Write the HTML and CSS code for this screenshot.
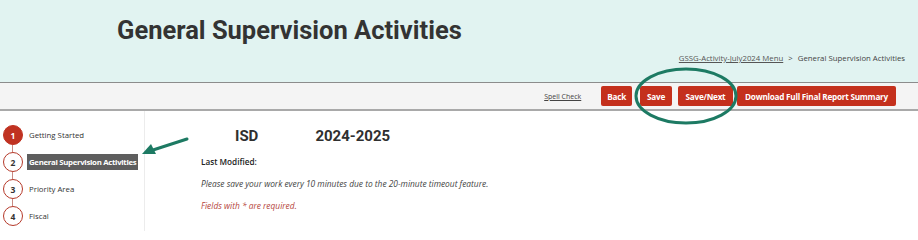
FILE: index.html
```html
<!DOCTYPE html>
<html>
<head>
<meta charset="utf-8">
<link rel="stylesheet" href="styles.css">
</head>
<body>
<div class="page">
  <header class="hero">
    <h1 class="title">General Supervision Activities</h1>
    <div class="crumbs"><a href="#" class="crumb-link">GSSG-Activity-July2024 Menu</a><span class="sep">&gt;</span><span>General Supervision Activities</span></div>
  </header>
  <div class="toolbar">
    <a href="#" class="spell">Spell Check</a>
    <button class="btn btn-back">Back</button>
    <button class="btn btn-save">Save</button>
    <button class="btn btn-next">Save/Next</button>
    <button class="btn btn-dl">Download Full Final Report Summary</button>
  </div>
  <div class="main">
    <nav class="steps">
      <div class="step done"><span class="num">1</span><span class="label">Getting Started</span></div>
      <div class="step current"><span class="num">2</span><span class="label">General Supervision Activities</span></div>
      <div class="step"><span class="num">3</span><span class="label">Priority Area</span></div>
      <div class="step last"><span class="num">4</span><span class="label">Fiscal</span></div>
    </nav>
    <section class="content">
      <div class="heading"><span class="isd">ISD</span><span class="year">2024-2025</span></div>
      <p class="modified">Last Modified:</p>
      <p class="note">Please save your work every 10 minutes due to the 20-minute timeout feature.</p>
      <p class="req">Fields with * are required.</p>
    </section>
  </div>
  <svg class="ring" width="110" height="62" viewBox="0 0 110 62"><ellipse cx="55" cy="31" rx="50" ry="27" fill="none" stroke="#1d7a63" stroke-width="3"/></svg>
  <svg class="arrow" width="50" height="20" viewBox="0 0 50 20"><line x1="46" y1="2" x2="12" y2="13" stroke="#1d7a63" stroke-width="3" stroke-linecap="round"/><polygon points="1,17 10,7 15,17" fill="#1d7a63"/></svg>
</div>
</body>
</html>
```
FILE: styles.css
```css
* { box-sizing: border-box; }
body { margin: 0; background: #fff; font-family: "Open Sans", "Liberation Sans", sans-serif; color: #333; }
.page { position: relative; width: 918px; height: 232px; overflow: hidden; }
.hero { height: 83px; background: #e1f3f1; border-bottom: 1px solid #8c8c8c; padding: 12px 13px 0 117px; }
.title { margin: 0; font-family: Roboto, "Liberation Sans", sans-serif; font-weight: 700; font-size: 25.5px; line-height: 36px; color: #333; }
.crumbs { margin-top: 4px; text-align: right; font-size: 7.8px; color: #444; line-height: 12px; }
.crumb-link { color: #555; text-decoration: underline; }
.sep { margin: 0 5px; }
.toolbar { height: 28px; background: #f4f4f4; border-bottom: 2px solid #a9a9a9; display: flex; align-items: center; justify-content: flex-end; padding: 0 22px 0 0; }
.spell { font-size: 7px; color: #444; text-decoration: underline; margin-right: 20px; }
.btn { border: 0; background: #c4301c; color: #fff; font-family: "Open Sans", "Liberation Sans", sans-serif; font-weight: 700; font-size: 8.2px; height: 20px; padding: 0 6px; border-radius: 2px; letter-spacing: -0.25px; }
.btn-back { margin-right: 8px; }
.btn-save { margin-right: 6px; width: 32px; }
.btn-next { margin-right: 4px; width: 55px; }
.btn-dl { width: 159px; }
.main { display: flex; height: 120px; }
.steps { width: 145px; border-right: 1px solid #ececec; padding: 14px 0 0 3px; display: flex; flex-direction: column; gap: 7px; }
.step { display: flex; align-items: center; gap: 4px; height: 20px; position: relative; }
.step::after { content: ""; position: absolute; left: 9px; top: 20px; width: 1px; height: 7px; background: #c98a82; }
.step.last::after { display: none; }
.num { width: 20px; height: 20px; border-radius: 50%; border: 1.5px solid #b5392a; background: #fff; display: flex; align-items: center; justify-content: center; font-size: 8.5px; font-weight: 700; color: #333; flex: none; }
.done .num { background: #c03221; color: #fff; border-color: #c03221; }
.label { font-size: 7.8px; color: #333; padding: 3px 2px; white-space: nowrap; }
.current .label { background: #5e5e5e; color: #fff; font-weight: 700; letter-spacing: -0.3px; }
.content { padding: 15px 0 0 56px; }
.heading { display: flex; font-family: Roboto, "Liberation Sans", sans-serif; font-weight: 700; font-size: 15px; color: #2f2f2f; line-height: 20px; padding-left: 34px; }
.year { margin-left: 57px; }
.modified { margin: 10px 0 0; font-size: 8.2px; font-weight: 600; color: #222; }
.note { margin: 11px 0 0; font-size: 8.4px; font-style: italic; color: #444; }
.req { margin: 11px 0 0; font-size: 8.4px; font-style: italic; color: #b5443a; }
.ring { position: absolute; left: 631px; top: 65px; }
.arrow { position: absolute; left: 141px; top: 137px; }
```
